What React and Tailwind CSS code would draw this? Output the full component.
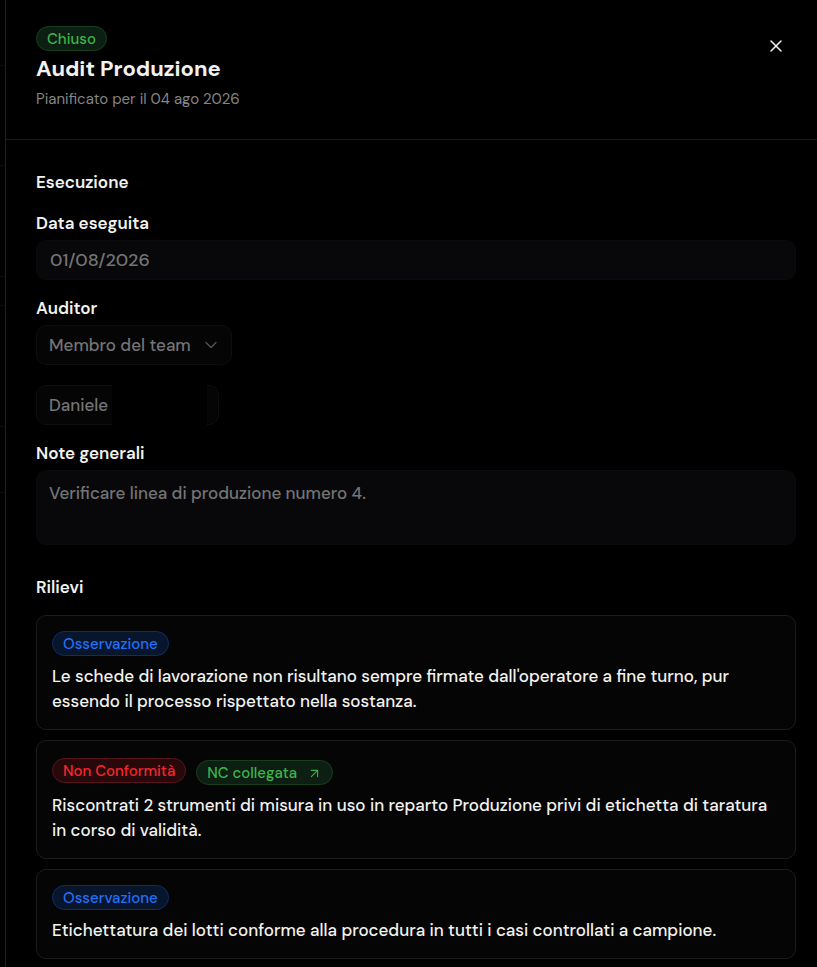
import React from "react";
import { X, ChevronDown, ArrowUpRight } from "lucide-react";

const badgeStyles = {
  green: "bg-[#0d1f12] border-[#17401f] text-[#3bb54a]",
  blue: "bg-[#07152d] border-[#0d2f66] text-[#2470f5]",
  red: "bg-[#27090b] border-[#58131a] text-[#f8262c]",
};

const findings = [
  {
    id: 1,
    type: "Osservazione",
    color: "blue",
    text: "Le schede di lavorazione non risultano sempre firmate dall'operatore a fine turno, pur essendo il processo rispettato nella sostanza.",
  },
  {
    id: 2,
    type: "Non Conformità",
    color: "red",
    linked: true,
    text: "Riscontrati 2 strumenti di misura in uso in reparto Produzione privi di etichetta di taratura in corso di validità.",
  },
  {
    id: 3,
    type: "Osservazione",
    color: "blue",
    text: "Etichettatura dei lotti conforme alla procedura in tutti i casi controllati a campione.",
  },
];

// Heights of the table rows still visible behind the panel
const backgroundRows = [
  "h-[66px]",
  "h-[100px]",
  "h-[111px]",
  "h-[29px]",
  "h-[121px]",
  "h-[66px]",
];

const Badge = ({ color, children }) => (
  <span
    className={`inline-flex h-[25px] items-center rounded-full border px-[10px] pt-px text-[15px] leading-5 font-medium whitespace-nowrap ${badgeStyles[color]}`}
  >
    {children}
  </span>
);

const Label = ({ htmlFor, children }) => (
  <label htmlFor={htmlFor} className="mb-1 block text-[17px] leading-[25px] font-semibold">
    {children}
  </label>
);

const Finding = ({ finding }) => (
  <li className="rounded-[10px] border border-[#1c1c1c] bg-[#050505] p-[15px]">
    <div className="mb-2 flex items-center gap-[10px]">
      <Badge color={finding.color}>{finding.type}</Badge>
      {finding.linked && (
        <a href="#nc" className="flex pt-1">
          <Badge color="green">
            NC collegata
            <ArrowUpRight className="ml-[10px] size-[15px]" strokeWidth={1.75} />
          </Badge>
        </a>
      )}
    </div>
    <p className="text-[17px] leading-[25px] font-medium">{finding.text}</p>
  </li>
);

const App = () => {
  return (
    <div className="flex min-h-screen bg-black font-['DM_Sans','Inter',sans-serif] text-[#f2f2f0]">
      <div className="w-[5px] shrink-0">
        {backgroundRows.map((height, i) => (
          <div key={i} className={`border-b border-[#0b0c0c] ${height}`} />
        ))}
      </div>

      <aside className="min-w-0 flex-1 border-l border-[#1f1f1f]">
        {/* Header */}
        <header className="flex items-start justify-between border-b border-[#1c1c1c] pt-[26px] pr-[31px] pb-7 pl-[30px]">
          <div>
            <div className="flex">
              <Badge color="green">Chiuso</Badge>
            </div>
            <h1 className="text-[22px] leading-[36px] font-bold">Audit Produzione</h1>
            <p className="text-[15px] leading-6 text-[#858585]">
              Pianificato per il 04 ago 2026
            </p>
          </div>
          <button type="button" aria-label="Chiudi" className="mt-[10px]">
            <X className="size-5" strokeWidth={1.75} />
          </button>
        </header>

        <div className="pt-[30px] pr-[21px] pb-2 pl-[30px]">
          {/* Execution */}
          <h2 className="mb-4 text-[17px] leading-[25px] font-semibold">Esecuzione</h2>

          <div className="mb-4">
            <Label htmlFor="date">Data eseguita</Label>
            <input
              id="date"
              type="text"
              disabled
              defaultValue="01/08/2026"
              className="block h-10 w-full rounded-[10px] border border-[#0b0b0d] bg-[#08080a] px-[13px] text-[18px] font-medium text-[#747474]"
            />
          </div>

          <div className="mb-4">
            <Label htmlFor="auditor">Auditor</Label>
            <div className="relative mb-5 w-[196px]">
              <select
                id="auditor"
                disabled
                className="block h-10 w-full appearance-none rounded-[10px] border border-[#0e0e0e] bg-[#050505] px-3 pt-0.5 text-[17px] font-medium text-[#747474]"
              >
                <option>Membro del team</option>
              </select>
              <ChevronDown
                className="absolute top-[10px] right-[11px] size-5 text-[#55555a]"
                strokeWidth={1.5}
              />
            </div>
            <div className="relative w-[183px]">
              <select
                aria-label="Membro"
                disabled
                className="block h-10 w-full appearance-none rounded-[10px] border border-[#0e0e0e] bg-[#050505] px-3 pt-0.5 text-[17px] font-medium text-[#747474]"
              >
                <option>Daniele</option>
              </select>
              {/* Surname is hidden */}
              <div className="absolute -top-1 right-3 h-11 w-[95px] bg-black" />
            </div>
          </div>

          <div className="mb-[30px]">
            <Label htmlFor="notes">Note generali</Label>
            <textarea
              id="notes"
              disabled
              defaultValue="Verificare linea di produzione numero 4."
              className="block h-[75px] w-full resize-none rounded-[10px] border border-[#0b0b0d] bg-[#08080a] px-3 py-[10px] text-[17px] leading-[25px] font-medium text-[#747474]"
            />
          </div>

          {/* Findings */}
          <h2 className="mb-[15px] text-[17px] leading-[25px] font-semibold">Rilievi</h2>
          <ul className="flex flex-col gap-[10px]">
            {findings.map((finding) => (
              <Finding key={finding.id} finding={finding} />
            ))}
          </ul>
        </div>
      </aside>
    </div>
  );
};

export default App;
